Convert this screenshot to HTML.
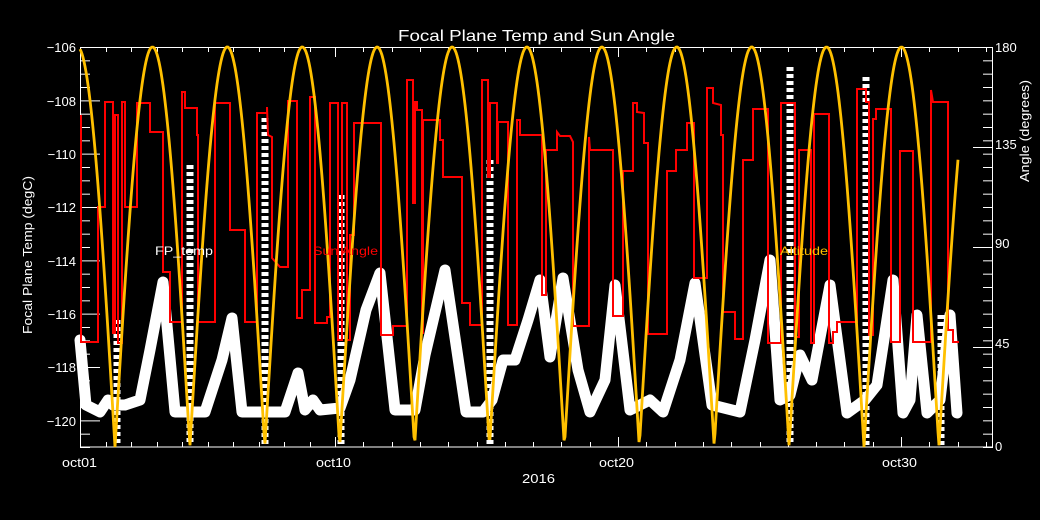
<!DOCTYPE html>
<html><head><meta charset="utf-8"><style>
html,body{margin:0;padding:0;background:#000;width:1040px;height:520px;overflow:hidden}
svg{display:block}
text{font-family:"Liberation Sans",sans-serif}
</style></head><body>
<svg id="s" width="1040" height="520" viewBox="0 0 1040 520" xmlns="http://www.w3.org/2000/svg">
<rect width="1040" height="520" fill="#000"/>
<text x="398" y="41" fill="#fff" font-size="16" textLength="277" lengthAdjust="spacingAndGlyphs">Focal Plane Temp and Sun Angle</text>
<g id="ticks" stroke="#fff" stroke-width="1"></g>
<rect x="80.5" y="47.5" width="912" height="399.5" fill="none" stroke="#fff" stroke-width="1"/>
<g fill="#fff" font-size="13" text-anchor="end">
<text x="76" y="52">−106</text>
<text x="76" y="106">−108</text>
<text x="76" y="159">−110</text>
<text x="76" y="212">−112</text>
<text x="76" y="266">−114</text>
<text x="76" y="319">−116</text>
<text x="76" y="372">−118</text>
<text x="76" y="426">−120</text>
</g>
<g fill="#fff" font-size="13">
<text x="995" y="52">180</text>
<text x="995" y="149">135</text>
<text x="995" y="248">90</text>
<text x="995" y="348">45</text>
<text x="995" y="451">0</text>
<text x="62" y="467" textLength="35" lengthAdjust="spacingAndGlyphs">oct01</text>
<text x="316" y="467" textLength="35" lengthAdjust="spacingAndGlyphs">oct10</text>
<text x="599" y="467" textLength="35" lengthAdjust="spacingAndGlyphs">oct20</text>
<text x="882" y="467" textLength="35" lengthAdjust="spacingAndGlyphs">oct30</text>
<text x="522" y="483" textLength="33" lengthAdjust="spacingAndGlyphs">2016</text>
<text transform="translate(32,334) rotate(-90)" textLength="158" lengthAdjust="spacingAndGlyphs">Focal Plane Temp (degC)</text>
<text transform="translate(1029,182) rotate(-90)" textLength="102" lengthAdjust="spacingAndGlyphs">Angle (degrees)</text>
</g>
<g id="white" fill="none" stroke="#fff" stroke-linejoin="round" stroke-linecap="round">
<polyline stroke-width="11" points="80,340 86,405 100,412 108,400 113,405 125,405 140,400 150,350 163,282 175,412 205,412 222,360 232,318 242,412 285,412 298,373 305,410 313,400 320,410 340,408 350,380 366,310 380,273 395,410 415,410 425,355 445,270 466,412 483,412 492,400 503,360 515,360 528,320 540,280 550,357 563,278 578,370 590,412 605,380 615,285 630,410 650,400 663,412 680,360 695,283 712,405 740,412 755,340 770,260 780,400 790,395 800,355 812,380 830,285 847,413 865,400 877,385 893,280 903,413 910,400 917,315 927,413 940,400 950,315 957,413"/>
<g stroke-width="7" stroke-dasharray="4 3" stroke-linecap="butt">
<line x1="117" y1="320" x2="117" y2="445"/>
<line x1="190" y1="165" x2="190" y2="445"/>
<line x1="265" y1="118" x2="265" y2="445"/>
<line x1="341" y1="195" x2="341" y2="445"/>
<line x1="490" y1="160" x2="490" y2="445"/>
<line x1="790" y1="67" x2="790" y2="445"/>
<line x1="866" y1="77" x2="866" y2="445"/>
<line x1="941" y1="315" x2="941" y2="445"/>
</g>
</g>
<polyline fill="none" stroke="#ff0000" stroke-width="2" points="81,115 81,342 98,342 98,207 105,207 105,102 113,102 113,333 115,333 115,115 118,115 118,343 122,343 122,102 125,102 125,207 137,207 137,103 150,103 150,132 163,132 163,272 170,272 170,322 182,322 182,92 185,92 185,108 197,108 197,135 198,135 198,322 215,322 215,103 230,103 230,230 245,230 245,322 257,322 257,113 267,113 267,107 268,135 272,137 272,258 280,267 288,267 288,101 297,101 297,318 302,318 302,290 310,290 310,97 315,97 315,323 327,323 327,317 330,317 330,103 338,103 338,340 342,340 342,103 347,103 347,340 350,340 350,235 354,235 354,123 381,123 381,335 393,335 393,326 407,326 407,80 413,80 413,203 415,203 415,102 417,102 417,110 422,110 422,333 423,333 423,120 440,120 440,140 443,140 443,177 462,177 462,303 470,303 470,325 482,325 482,80 488,80 488,177 490,177 490,103 497,103 497,163 498,163 498,122 508,122 508,325 517,325 517,120 520,120 520,135 542,135 542,295 546,295 546,150 557,150 557,132 560,136 570,136 573,142 573,326 589,326 589,137 590,150 613,150 613,316 623,316 623,171 633,171 633,103 637,103 637,112 644,113 644,143 648,143 648,334 667,334 667,171 676,171 676,150 687,150 687,123 694,123 694,278 707,278 707,88 713,88 713,103 721,105 721,135 723,135 723,312 735,312 735,339 743,339 743,160 753,160 753,109 768,109 768,343 781,343 781,103 795,103 795,337 799,337 799,150 811,150 811,343 814,343 814,114 829,114 829,343 833,343 833,332 837,332 837,322 857,322 857,89 866,89 866,102 869,102 869,335 873,335 873,119 876,119 876,109 891,109 891,342 900,342 900,151 913,151 913,342 931,342 931,90 933,102 948,102 948,330 953,330 953,342 959,342"/>
<path id="yel" fill="none" stroke="#ffc000" stroke-width="2.8" d=""/>
<text x="155" y="255" fill="#fff" font-size="12" textLength="58" lengthAdjust="spacingAndGlyphs">FP_temp</text>
<text x="313" y="255" fill="#ff0000" font-size="12" textLength="65" lengthAdjust="spacingAndGlyphs">Sun Angle</text>
<text x="780" y="255" fill="#ffc000" font-size="12" textLength="48" lengthAdjust="spacingAndGlyphs">Altitude</text>
</svg>
<script>
(function(){
var d="";
for(var x=80;x<=958;x+=1){
 var a=180*Math.abs(Math.sin(Math.PI*(x-115)/74.9));
 var y=447-a*400/180;
 d+=(x==80?"M":"L")+x+","+y.toFixed(1);
}
document.getElementById("yel").setAttribute("d",d);
var g=document.getElementById("ticks"),h="";
function L(x1,y1,x2,y2){h+='<line x1="'+x1+'" y1="'+y1+'" x2="'+x2+'" y2="'+y2+'"/>';}
for(var i=0;i<=30;i++){var y=47+i*400/30+0.5;var big=(i%4==0);L(80,y,80+(big?20:10),y);}
for(var i=0;i<=30;i++){var y=447-i*400/30+0.5;L(993,y,983,y);}
L(993,147.5,973,147.5);L(993,247.5,973,247.5);L(993,347.5,973,347.5);
var xs=[];for(var i=0;i<=10;i++)xs.push([80+i*25.5,i%10==0]);
for(var i=1;i<=23;i++){var x=335+i*28.3;if(x<993)xs.push([x,i%10==0]);}
xs.forEach(function(p){var x=Math.round(p[0])+0.5;var l=p[1]?10:5;L(x,447,x,447-l);L(x,47,x,47+l);});
g.innerHTML=h;
})();
</script>
</body></html>
